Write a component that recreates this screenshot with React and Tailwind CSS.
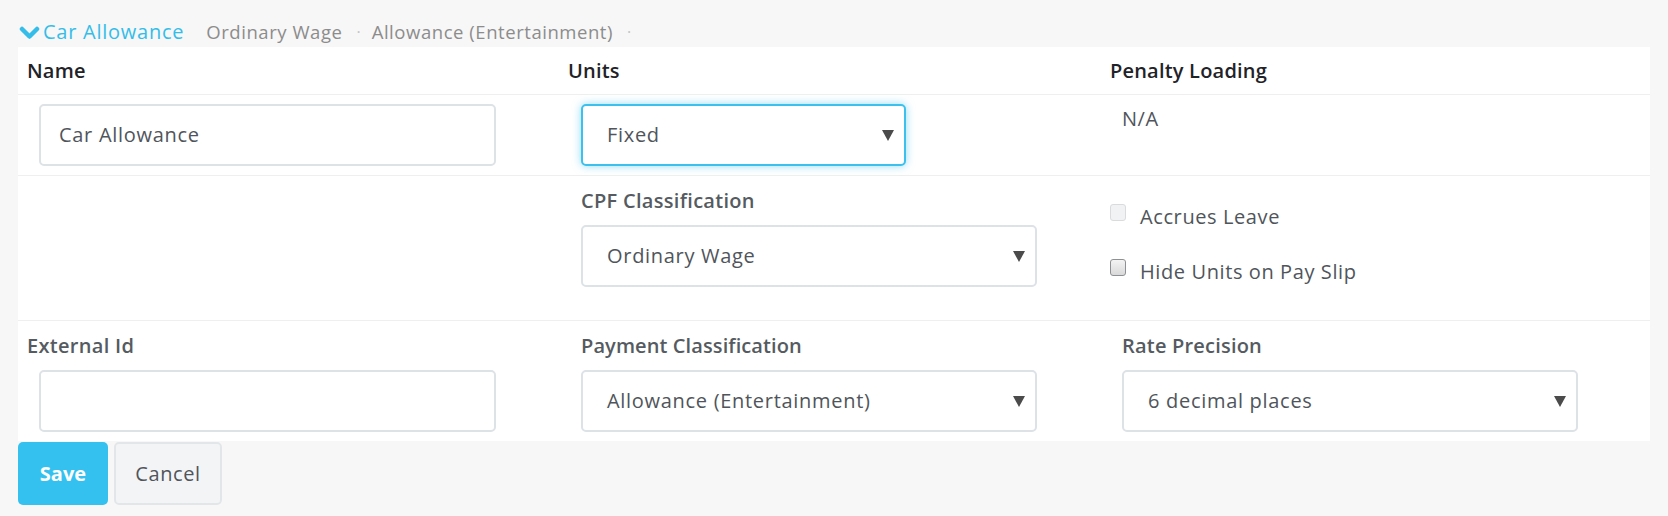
import React from "react";

const font = { fontFamily: '"Open Sans", "Liberation Sans", sans-serif' };

function Arrow() {
  return (
    <svg width="12" height="11" viewBox="0 0 12 11" className="shrink-0">
      <path d="M0 0 H12 L6 11 Z" fill="#4b4b4b" />
    </svg>
  );
}

function SelectBox({ value, width, focused }) {
  return (
    <div
      className={
        "h-[62px] flex items-center justify-between pl-[24px] pr-[10px] rounded-[5px] bg-white text-[20px] tracking-[0.7px] text-[#50555b] " +
        (focused
          ? "border-2 border-[#3cc1ee] shadow-[0_0_9px_rgba(60,190,238,0.55)]"
          : "border-2 border-[#dde2e6]")
      }
      style={{ width }}
    >
      <span className="leading-[28px]">{value}</span>
      <Arrow />
    </div>
  );
}

function TextBox({ value }) {
  return (
    <div className="h-[62px] w-[457px] flex items-center pl-[18px] rounded-[5px] border-2 border-[#dde2e6] bg-white text-[20px] tracking-[0.7px] text-[#50555b]">
      <span className="leading-[28px]">{value}</span>
    </div>
  );
}

function Check({ disabled, label }) {
  return (
    <div className="flex items-start h-[28px]">
      <div
        className={
          "mt-[1px] w-[16px] h-[17px] rounded-[3px] border " +
          (disabled
            ? "border-[#d9dbdd] bg-[#f1f2f3]"
            : "border-[#8e9194] bg-gradient-to-b from-[#f4f4f4] to-[#d9d9d9]")
        }
      />
      <span className="ml-[14px] text-[20px] leading-[28px] tracking-[0.6px] text-[#50555b]">{label}</span>
    </div>
  );
}

export default function App() {
  return (
    <div className="min-h-screen w-full bg-[#f7f7f7]" style={font}>
      {/* breadcrumb */}
      <div className="h-[47px] flex items-end pb-[1px] pl-[19px]">
        <div className="flex items-center h-[28px]">
          <svg width="21" height="14" viewBox="0 0 21 14" className="mt-[1px]">
            <polyline points="3,3 10.5,10.5 18,3" fill="none" stroke="#35bde9" strokeWidth="4.5" strokeLinecap="round" strokeLinejoin="round" />
          </svg>
          <span className="ml-[3px] text-[20px] leading-[28px] tracking-[0.75px] text-[#35bde9]">Car Allowance</span>
          <span className="ml-[22px] text-[18.5px] leading-[28px] tracking-[0.55px] text-[#8c8c8c]">Ordinary Wage</span>
          <span className="ml-[14px] text-[16px] leading-[28px] text-[#c4c4c4]">·</span>
          <span className="ml-[11px] text-[18.5px] leading-[28px] tracking-[0.55px] text-[#8c8c8c]">Allowance (Entertainment)</span>
          <span className="ml-[14px] text-[16px] leading-[28px] text-[#c4c4c4]">·</span>
        </div>
      </div>

      {/* panel */}
      <div className="ml-[18px] mr-[18px] bg-white">
        {/* header row */}
        <div className="grid grid-cols-[541px_541px_1fr] h-[48px] border-b border-[#efefef] pt-[10px]">
          <div className="pl-[9px] text-[20px] leading-[28px] font-semibold tracking-[0.2px] text-[#1f2328]">Name</div>
          <div className="pl-[9px] text-[20px] leading-[28px] font-semibold tracking-[0.2px] text-[#1f2328]">Units</div>
          <div className="pl-[10px] text-[20px] leading-[28px] font-semibold tracking-[0.2px] text-[#1f2328]">Penalty Loading</div>
        </div>

        {/* row 2 */}
        <div className="grid grid-cols-[541px_541px_1fr] border-b border-[#efefef] pt-[9px] pb-[9px]">
          <div className="pl-[21px]">
            <TextBox value="Car Allowance" />
          </div>
          <div className="pl-[22px]">
            <SelectBox value="Fixed" width="325px" focused />
          </div>
          <div className="pl-[22px] pt-[1px] text-[20px] leading-[28px] tracking-[0.5px] text-[#50555b]">N/A</div>
        </div>

        {/* row 3 */}
        <div className="grid grid-cols-[541px_541px_1fr] h-[145px] border-b border-[#efefef]">
          <div />
          <div className="pl-[22px] pt-[11px] flex flex-col gap-[10px]">
            <div className="text-[20px] leading-[28px] font-semibold tracking-[0.3px] text-[#555b61]">CPF Classification</div>
            <SelectBox value="Ordinary Wage" width="456px" />
          </div>
          <div className="pl-[10px] pt-[27px] flex flex-col gap-[27px]">
            <Check disabled label="Accrues Leave" />
            <Check label="Hide Units on Pay Slip" />
          </div>
        </div>

        {/* row 4 */}
        <div className="grid grid-cols-[541px_541px_1fr] pt-[11px] pb-[9px]">
          <div className="flex flex-col gap-[10px]">
            <div className="pl-[9px] text-[20px] leading-[28px] font-semibold tracking-[0.3px] text-[#555b61]">External Id</div>
            <div className="pl-[21px]">
              <TextBox value="" />
            </div>
          </div>
          <div className="pl-[22px] flex flex-col gap-[10px]">
            <div className="text-[20px] leading-[28px] font-semibold tracking-[0.1px] text-[#555b61]">Payment Classification</div>
            <SelectBox value="Allowance (Entertainment)" width="456px" />
          </div>
          <div className="pl-[22px] flex flex-col gap-[10px]">
            <div className="text-[20px] leading-[28px] font-semibold tracking-[0.2px] text-[#555b61]">Rate Precision</div>
            <SelectBox value="6 decimal places" width="456px" />
          </div>
        </div>
      </div>

      {/* buttons */}
      <div className="flex gap-[6px] pl-[18px] pt-[1px]">
        <button className="h-[63px] w-[90px] rounded-[5px] bg-[#34c1ef] text-white text-[20px] font-bold">Save</button>
        <button className="h-[63px] w-[108px] rounded-[5px] bg-[#f3f4f6] border-2 border-[#e3e6e9] text-[#50555b] text-[20px] font-medium tracking-[0.6px]">Cancel</button>
      </div>
    </div>
  );
}
